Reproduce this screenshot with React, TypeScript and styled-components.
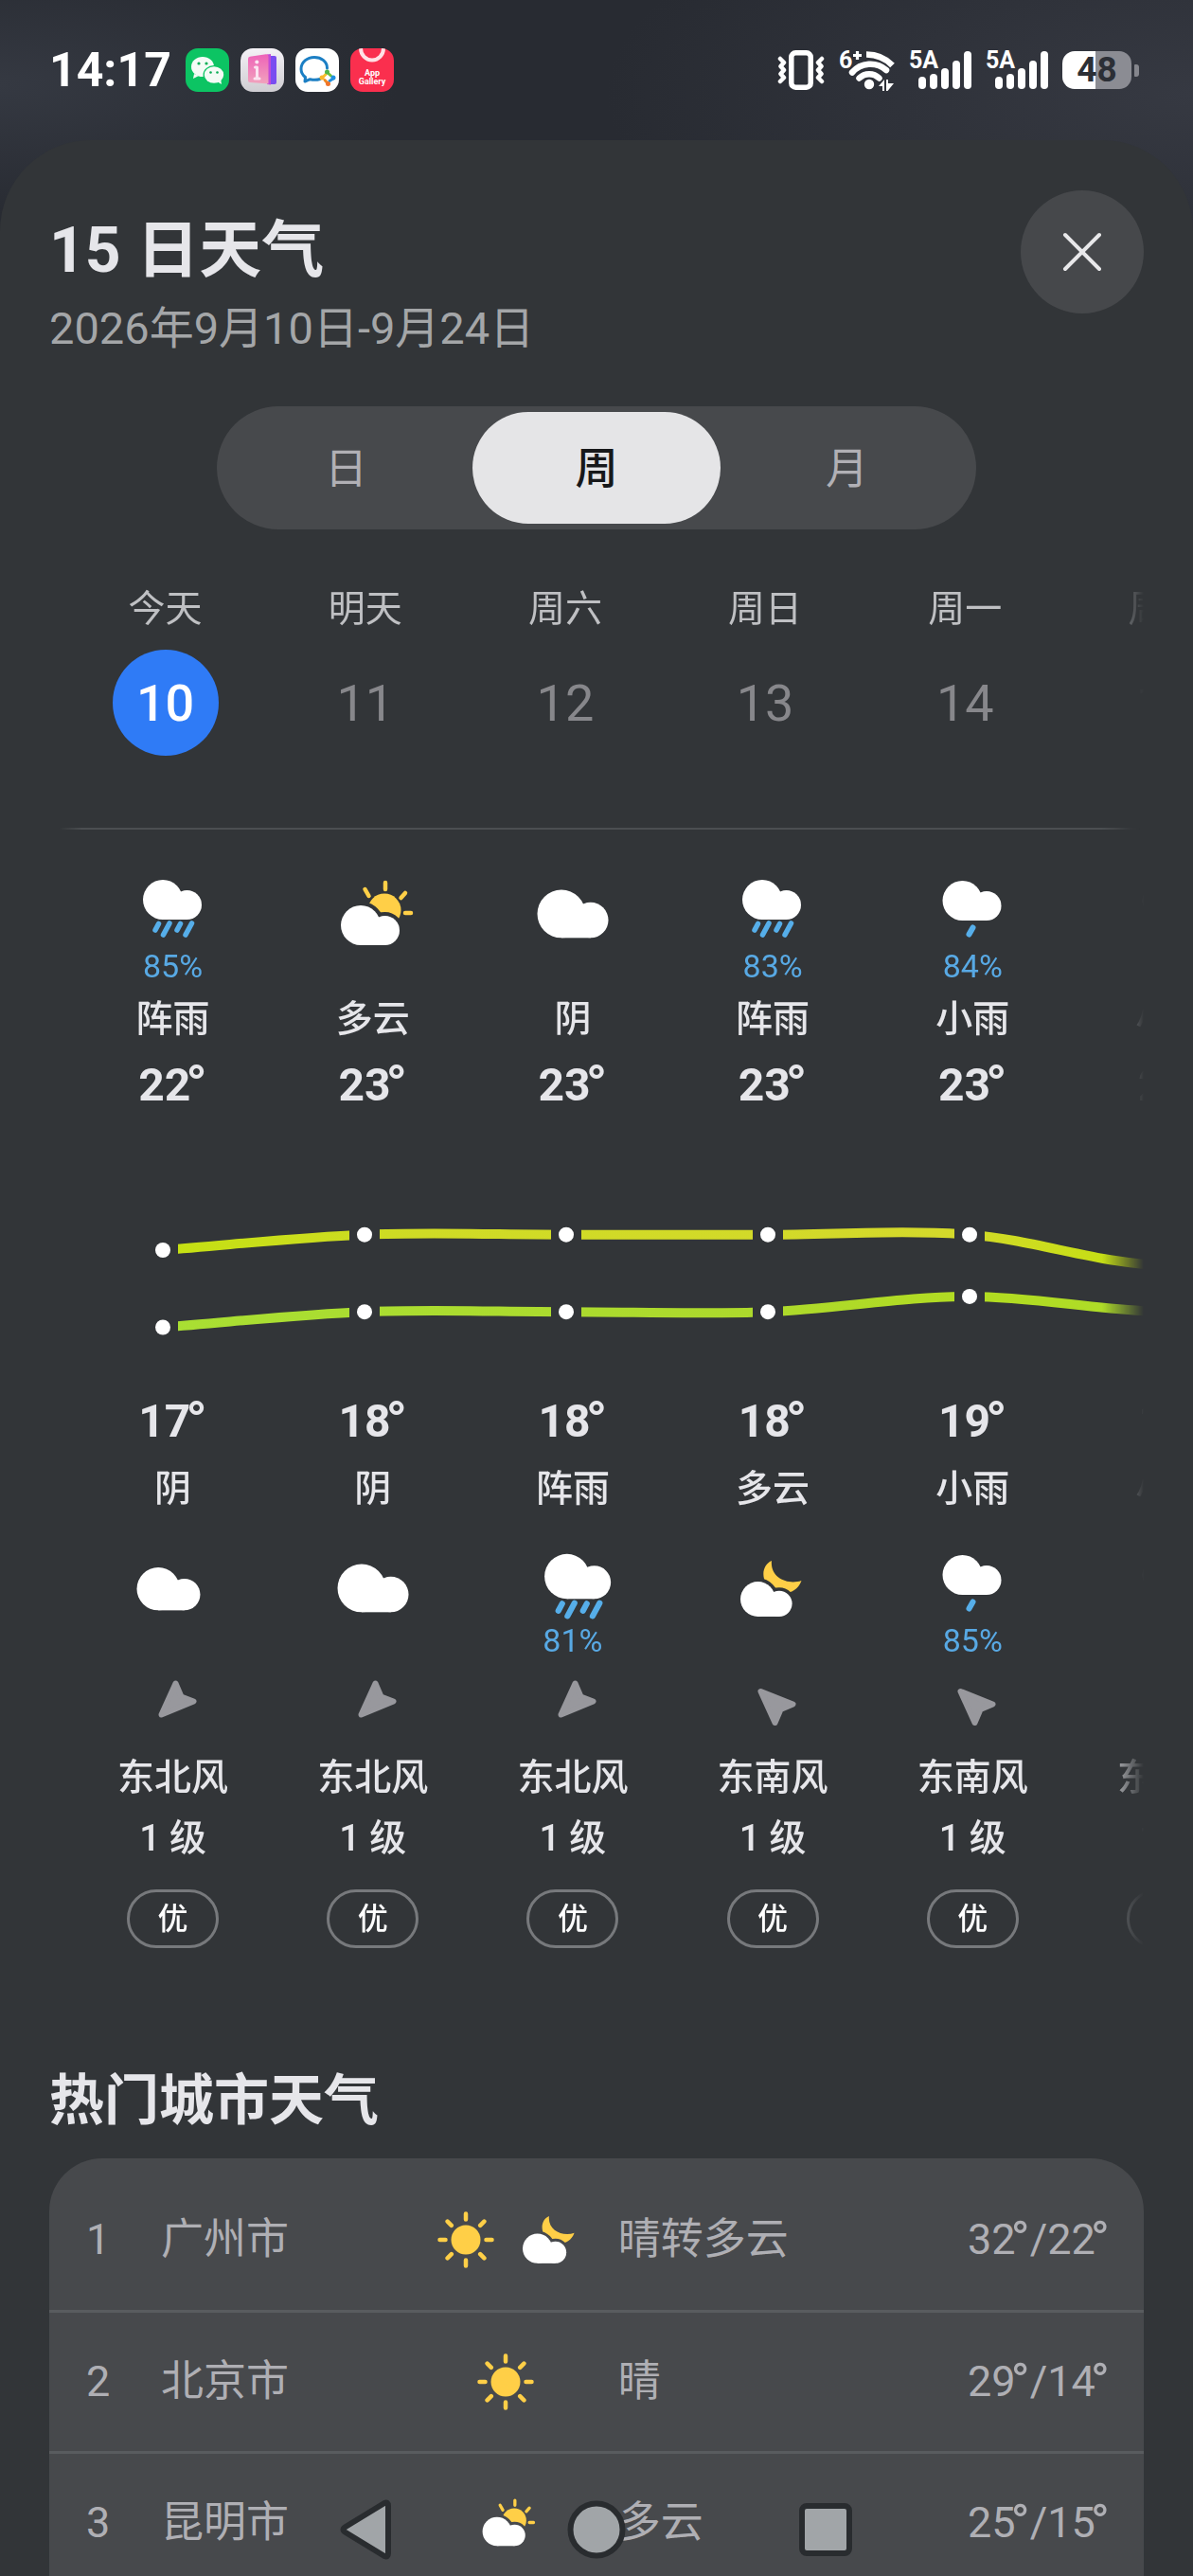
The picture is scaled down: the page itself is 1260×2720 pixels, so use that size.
import React, { useId, useState } from "react";
import styled, { createGlobalStyle } from "styled-components";

const GlobalStyle = createGlobalStyle`
  *, *::before, *::after { box-sizing: border-box; }
  html, body { margin: 0; background: #2b2e35; }
  body {
    font-family: Roboto, "Noto Sans CJK SC", sans-serif;
    color: #e6e6ea;
    overflow: hidden;
  }
  button { font: inherit; color: inherit; border: 0; padding: 0; background: none; cursor: pointer; }
  svg { display: block; }
`;

/* ---------- layout ---------- */

const Screen = styled.div`
  display: flex;
  flex-direction: column;
  height: 100vh;
  background:
    radial-gradient(420px 140px at 0% 90px, #353942, transparent),
    radial-gradient(620px 240px at 100% 100px, #363942, transparent),
    #282b32;
`;

const StatusBar = styled.header`
  display: flex;
  flex: none;
  align-items: center;
  justify-content: space-between;
  height: 148px;
  padding: 0 57px 0 52px;
  color: #fff;
`;

const StatusGroup = styled.div<{ $gap: number }>`
  display: flex;
  align-items: center;
  gap: ${(p) => p.$gap}px;
`;

const Clock = styled.time`
  margin-right: 3px;
  font-size: 50px;
  font-weight: 700;
  line-height: 56px;
`;

const Sheet = styled.main`
  display: flex;
  flex: 1;
  flex-direction: column;
  min-height: 0;
  overflow: hidden;
  padding: 53px 52px 0;
  border-radius: 96px 96px 0 0;
  background: #323538;
`;

const SheetHeader = styled.div`
  display: flex;
  flex: none;
  justify-content: space-between;
  align-items: flex-start;
`;

const TitleBlock = styled.div`
  padding-top: 24px;
`;

const Title = styled.h1`
  margin: 0;
  font-size: 66px;
  font-weight: 700;
  line-height: 80px;
`;

const DateRange = styled.p`
  margin: 12px 0 0;
  color: #a4a6a8;
  font-size: 47px;
  line-height: 60px;
`;

const CloseButton = styled.button`
  display: grid;
  place-items: center;
  width: 130px;
  height: 130px;
  border-radius: 50%;
  background: #46484b;
`;

const Segmented = styled.div`
  display: grid;
  flex: none;
  grid-template-columns: repeat(3, 1fr);
  gap: 3px;
  align-self: center;
  width: 69.4%;
  height: 130px;
  margin-top: 52px;
  padding: 6px;
  border-radius: 65px;
  background: #47494c;
`;

const Segment = styled.button<{ $active: boolean }>`
  padding-bottom: 6px;
  border-radius: 60px;
  background: ${(p) => (p.$active ? "#e5e5e7" : "transparent")};
  color: ${(p) => (p.$active ? "#17181a" : "#b1b0b5")};
  font-size: 45px;
  font-weight: ${(p) => (p.$active ? 500 : 400)};
`;

const Scroller = styled.section`
  flex: none;
  overflow: hidden;
  mask-image: linear-gradient(to right, #000 calc(100% - 44px), transparent);
`;

const Days = styled.ul<{ $indent: number; $top: number }>`
  display: grid;
  grid-auto-flow: column;
  grid-auto-columns: 16.76vw;
  margin: 0;
  padding: ${(p) => p.$top}px 0 0 ${(p) => p.$indent}px;
  list-style: none;
`;

const Day = styled.li`
  display: flex;
  flex-direction: column;
  align-items: center;
  white-space: nowrap;
`;

const DayName = styled.span`
  color: #bfc0c3;
  font-size: 39px;
  line-height: 56px;
`;

const DayNumber = styled.button<{ $active: boolean }>`
  width: 112px;
  height: 112px;
  margin-top: 15px;
  border-radius: 50%;
  background: ${(p) => (p.$active ? "#2f7bf6" : "transparent")};
  color: ${(p) => (p.$active ? "#fff" : "#87878b")};
  font-size: 54px;
  font-weight: ${(p) => (p.$active ? 500 : 400)};
`;

const Divider = styled.hr`
  height: 2px;
  margin: 76px 4px 0 10px;
  border: 0;
  background: linear-gradient(to right, transparent, #4b4e51 24px, #4b4e51 calc(100% - 24px), transparent);
`;

const IconBox = styled.div`
  width: 96px;
  height: 88px;
`;

const Chance = styled.span`
  height: 34px;
  color: #58a9e4;
  font-size: 34px;
  line-height: 34px;
`;

const Label = styled.span<{ $top: number }>`
  margin-top: ${(p) => p.$top}px;
  font-size: 39px;
  font-weight: 500;
  line-height: 56px;
`;

const NightIcon = styled.div`
  margin-top: 27px;
`;

const Temperature = styled.strong<{ $top: number }>`
  margin-top: ${(p) => p.$top}px;
  font-size: 48px;
  font-weight: 700;
  line-height: 56px;
`;

const Degree = styled.span<{ $size: number }>`
  margin-left: -5px;
  font-size: ${(p) => p.$size}px;
  line-height: 1px;
  vertical-align: -3px;
`;

const Chart = styled.svg`
  width: 100%;
  height: auto;
  margin-top: 96px;
`;

const WindIcon = styled.svg`
  width: 52px;
  height: 52px;
  margin-top: 23px;
  fill: #98989d;
  stroke: #98989d;
`;

const AirBadge = styled.span`
  display: grid;
  place-items: center;
  width: 97px;
  height: 62px;
  margin-top: 26px;
  border: 3px solid #77797c;
  border-radius: 31px;
  color: #fff;
  font-size: 32px;
  font-weight: 500;
  line-height: 40px;
`;

const SectionTitle = styled.h2`
  flex: none;
  margin: 121px 0 0;
  font-size: 58px;
  font-weight: 700;
  line-height: 80px;
`;

const Card = styled.div`
  flex: 1;
  min-height: 0;
  margin-top: 21px;
  padding-top: 12px;
  overflow: hidden;
  border-radius: 56px 56px 0 0;
  background: #47494c;
`;

const Cities = styled.table`
  width: 100%;
  border-collapse: collapse;
  table-layout: fixed;
  color: #afafb4;
  font-size: 45px;
  line-height: 60px;
`;

const CityRow = styled.tr`
  height: 149px;
  border-bottom: 3px solid #595c5f;
`;

const Cell = styled.td<{ $width: string; $left?: number; $right?: number; $align?: string }>`
  width: ${(p) => p.$width};
  padding: 0 ${(p) => p.$right ?? 0}px 0 ${(p) => p.$left ?? 0}px;
  text-align: ${(p) => p.$align ?? "left"};
  white-space: nowrap;
`;

const CityIcons = styled.div`
  display: flex;
  align-items: center;
  justify-content: center;
  gap: 30px;
`;

const CompactIcon = styled.svg`
  overflow: visible;
`;

const NavBar = styled.nav`
  position: fixed;
  right: 0;
  bottom: 0;
  left: 0;
  display: flex;
  justify-content: center;
  gap: 178px;
  height: 96px;
  padding-top: 15px;
`;

const NavButton = styled.button`
  width: 64px;
  height: 64px;
`;

/* ---------- weather drawings ---------- */

const YELLOW = "#ffcf47";
const BLUE = "#56aee9";

const CloudShape = () => (
  <>
    <circle cx="21" cy="21" r="21" />
    <circle cx="46.5" cy="26.5" r="15.5" />
    <rect x="21" y="24" width="25.5" height="18" />
  </>
);

type Sky = "cloud" | "cloudSmall" | "rain" | "rainLarge" | "drizzle" | "sunCloud" | "moonCloud" | "sun";

const Rain = () => (
  <g stroke={BLUE} strokeWidth="5.5" strokeLinecap="round">
    <path d="M32.5 60.5 29 67M44 60 37.5 72M55.5 60.5 52 67M67.5 60 61 72" />
  </g>
);

function SkyDrawing({ kind }: { kind: Sky }) {
  const id = useId().replace(/[^a-zA-Z0-9]/g, "");
  switch (kind) {
    case "cloud":
      return <g fill="#fff" transform="translate(10.5 24.5) scale(1.21)"><CloudShape /></g>;
    case "cloudSmall":
      return <g fill="#fff" transform="translate(9.5 28) scale(1.08)"><CloudShape /></g>;
    case "rain":
      return <><g fill="#fff" transform="translate(16 14)"><CloudShape /></g><Rain /></>;
    case "rainLarge":
      return (
        <g transform="translate(0 -2) scale(1.13)">
          <g fill="#fff" transform="translate(16 14)"><CloudShape /></g><Rain />
        </g>
      );
    case "drizzle":
      return (
        <>
          <g fill="#fff" transform="translate(16.5 15)"><CloudShape /></g>
          <path d="M48.5 64.5 44.5 71.5" stroke={BLUE} strokeWidth="6" strokeLinecap="round" />
        </>
      );
    case "sunCloud":
      return (
        <>
          <mask id={id}>
            <rect width="100" height="100" fill="#fff" />
            <g transform="translate(14 41)" stroke="#000" strokeWidth="8"><CloudShape /></g>
          </mask>
          <circle cx="60" cy="46" r="17.5" fill={YELLOW} mask={`url(#${id})`} />
          <path d="M61 17V24M39.5 24 43.5 31M82 28 77.5 33M82 49H88" stroke={YELLOW} strokeWidth="4.5" strokeLinecap="round" />
          <g fill="#fff" transform="translate(14 41)"><CloudShape /></g>
        </>
      );
    case "moonCloud":
      return (
        <>
          <mask id={id}>
            <rect width="100" height="100" fill="#fff" />
            <g transform="translate(14 43) scale(.88)" stroke="#000" strokeWidth="8"><CloudShape /></g>
          </mask>
          <path d="M47 21C38 25 36 36 41 45 49 58 72 60 78.5 42 64 47 45 39 47 21Z" fill={YELLOW} mask={`url(#${id})`} />
          <g fill="#fff" transform="translate(14 43) scale(.88)"><CloudShape /></g>
        </>
      );
    case "sun":
      return (
        <>
          <circle cx="30" cy="30" r="15.5" fill={YELLOW} />
          <path
            d="M30 2.5V8.500M30 51.500V57.500M2.500 30H8.500M51.500 30H57.500M10.600 10.600 14.800 14.800M45.200 45.200 49.400 49.400M10.600 49.400 14.800 45.200M45.200 14.800 49.400 10.600"
            stroke={YELLOW} strokeWidth="4.5" strokeLinecap="round"
          />
        </>
      );
  }
}

const SkyIcon = ({ kind }: { kind: Sky }) => (
  <IconBox>
    <svg width="96" height="88" viewBox="0 0 96 88" aria-hidden="true"><SkyDrawing kind={kind} /></svg>
  </IconBox>
);

const compactBox: Partial<Record<Sky, [string, number, number]>> = {
  sun: ["0 0 60 60", 60, 60],
  moonCloud: ["14 20 65 60", 55, 51],
  sunCloud: ["8 14 79 70", 58, 51],
};

const CompactSkyIcon = ({ kind }: { kind: Sky }) => {
  const [viewBox, width, height] = compactBox[kind]!;
  return <CompactIcon viewBox={viewBox} width={width} height={height} aria-hidden="true"><SkyDrawing kind={kind} /></CompactIcon>;
};

/* ---------- data ---------- */

interface Forecast {
  name: string; date: number;
  high: number; dayText: string; dayIcon: Sky; dayChance?: number;
  low: number; nightText: string; nightIcon: Sky; nightChance?: number;
  wind: "东北风" | "东南风"; air: string;
}

const forecast: Forecast[] = [
  { name: "今天", date: 10, high: 22, dayText: "阵雨", dayIcon: "rain", dayChance: 85, low: 17, nightText: "阴", nightIcon: "cloudSmall", wind: "东北风", air: "优" },
  { name: "明天", date: 11, high: 23, dayText: "多云", dayIcon: "sunCloud", low: 18, nightText: "阴", nightIcon: "cloud", wind: "东北风", air: "优" },
  { name: "周六", date: 12, high: 23, dayText: "阴", dayIcon: "cloud", low: 18, nightText: "阵雨", nightIcon: "rainLarge", nightChance: 81, wind: "东北风", air: "优" },
  { name: "周日", date: 13, high: 23, dayText: "阵雨", dayIcon: "rain", dayChance: 83, low: 18, nightText: "多云", nightIcon: "moonCloud", wind: "东南风", air: "优" },
  { name: "周一", date: 14, high: 23, dayText: "小雨", dayIcon: "drizzle", dayChance: 84, low: 19, nightText: "小雨", nightIcon: "drizzle", nightChance: 85, wind: "东南风", air: "优" },
  { name: "周二", date: 15, high: 21, dayText: "小雨", dayIcon: "drizzle", low: 18, nightText: "小雨", nightIcon: "drizzle", wind: "东南风", air: "优" },
];

const cities: { name: string; icons: Sky[]; text: string; high: number; low: number }[] = [
  { name: "广州市", icons: ["sun", "moonCloud"], text: "晴转多云", high: 32, low: 22 },
  { name: "北京市", icons: ["sun"], text: "晴", high: 29, low: 14 },
  { name: "昆明市", icons: ["sunCloud"], text: "多云", high: 25, low: 15 },
];

/* ---------- chart ---------- */

const STEP = 213;
const chartY = (t: number) => 50 + (22 - t) * 16.3;

function curve(values: number[]) {
  const pts = values.map((v, i) => [120 + i * STEP, chartY(v)]);
  const slope = (i: number) => {
    const a = pts[Math.max(i - 1, 0)];
    const b = pts[Math.min(i + 1, pts.length - 1)];
    return i === pts.length - 1 ? 0 : (b[1] - a[1]) / (b[0] - a[0]);
  };
  const h = STEP / 3;
  return pts.slice(1).reduce(
    (d, p, i) => `${d}C${pts[i][0] + h} ${pts[i][1] + slope(i) * h} ${p[0] - h} ${p[1] - slope(i + 1) * h} ${p[0]} ${p[1]}`,
    `M${pts[0][0]} ${pts[0][1]}`
  );
}

function TemperatureChart() {
  const highs = forecast.map((f) => f.high);
  const lows = forecast.map((f) => f.low);
  return (
    <Chart viewBox="0 0 1156 160" role="img" aria-label="气温曲线">
      <defs>
        <linearGradient id="highLine" gradientUnits="userSpaceOnUse" x1="120" y1="0" x2="1156" y2="0">
          <stop offset="0" stopColor="#c4e012" />
          <stop offset=".26" stopColor="#cfdb25" />
          <stop offset=".8" stopColor="#d4d92b" />
          <stop offset="1" stopColor="#c3e010" />
        </linearGradient>
        <linearGradient id="lowLine" gradientUnits="userSpaceOnUse" x1="120" y1="0" x2="1156" y2="0">
          <stop offset="0" stopColor="#a9df33" />
          <stop offset=".6" stopColor="#add92c" />
          <stop offset=".85" stopColor="#b2dc21" />
          <stop offset="1" stopColor="#addc2a" />
        </linearGradient>
        <mask id="pointGaps" maskUnits="userSpaceOnUse" x="0" y="0" width="1300" height="160">
          <rect width="1300" height="160" fill="#fff" />
          {forecast.map((f, i) => <rect key={f.date} x={104 + i * STEP} width="32" height="160" fill="#000" />)}
        </mask>
      </defs>
      <g fill="none" strokeWidth="10" mask="url(#pointGaps)">
        <path d={curve(highs)} stroke="url(#highLine)" />
        <path d={curve(lows)} stroke="url(#lowLine)" />
      </g>
      {[highs, lows].map((set, s) =>
        set.map((t, i) => <circle key={`${s}-${i}`} cx={120 + i * STEP} cy={chartY(t)} r="8" fill="#fff" />)
      )}
    </Chart>
  );
}

/* ---------- status bar drawings ---------- */

const AppTile = styled.svg`
  width: 46px;
  height: 46px;
  border-radius: 13px;
`;

const StatusText = styled.text`
  font: 700 25px Roboto, sans-serif;
  fill: #fff;
`;

const WeChatTile = () => (
  <AppTile viewBox="0 0 46 46" aria-label="微信">
    <rect width="46" height="46" fill="#0cc463" />
    <g fill="#f4fbf6">
      <path d="M9 27 8 32 14 29Z" /><ellipse cx="18" cy="19.5" rx="12" ry="10.5" />
    </g>
    <ellipse cx="30" cy="28" rx="11.5" ry="10" fill="#0cc463" />
    <g fill="#f4fbf6"><ellipse cx="30" cy="28" rx="10.2" ry="8.7" /><path d="M33 35 38 38 37 32Z" /></g>
    <g fill="#0cae57"><circle cx="14" cy="16" r="1.6" /><circle cx="22" cy="16" r="1.6" /><circle cx="26.5" cy="25.5" r="1.3" /><circle cx="33.5" cy="25.5" r="1.3" /></g>
  </AppTile>
);

const BookTile = () => (
  <AppTile viewBox="0 0 46 46" aria-label="阅读">
    <defs>
      <linearGradient id="bookBg" x2="0" y2="1"><stop stopColor="#f4f1f6" /><stop offset="1" stopColor="#cfcdd2" /></linearGradient>
      <linearGradient id="bookCover" x2="0" y2="1"><stop stopColor="#ee62b8" /><stop offset="1" stopColor="#f1a3bd" /></linearGradient>
    </defs>
    <rect width="46" height="46" fill="url(#bookBg)" />
    <path d="M28 8 36 8Q38 8 38 10V36Q38 38 36 38H28Z" fill="#7a4cf0" />
    <path d="M28 6.5 32 6V38.500L28 38Z" fill="#c04bd8" />
    <path d="M8 11Q8 9 10 8.700L27 6.200Q29.500 6 29.500 8.500V37.500L10 36Q8 36 8 34Z" fill="url(#bookCover)" />
    <g stroke="#fbe3f0" strokeWidth="3" strokeLinecap="round"><path d="M17.500 20V31M15.500 20H17.500M15 32H20" /></g>
    <circle cx="17.3" cy="14.5" r="2" fill="#fbe3f0" />
  </AppTile>
);

const WorkTile = () => (
  <AppTile viewBox="0 0 46 46" aria-label="企业微信">
    <rect width="46" height="46" fill="#fff" />
    <path d="M33.500 21C33.500 14 27.500 9.500 20 9.500S6 14.500 6 22C6 26 8 28.500 10.500 30.500L10 35 15.500 32.700Q21 34 26 32.500" fill="none" stroke="#1c7fc4" strokeWidth="3" strokeLinejoin="round" strokeLinecap="round" />
    <g fill="none" strokeWidth="3" strokeLinecap="round">
      <path d="M33 25 37.500 29" stroke="#6cbf3f" /><path d="M40 32 36 34.500" stroke="#1f8fe0" />
      <path d="M34 37 31 33.500" stroke="#f08a24" /><path d="M28.500 31 32 27.500" stroke="#f6c02c" />
    </g>
    <g><circle cx="33.5" cy="25" r="2.5" fill="#4fb54a" /><circle cx="40" cy="31" r="2.5" fill="#1f8fe0" /><circle cx="34.5" cy="37.5" r="2.5" fill="#f0752b" /><circle cx="28" cy="31" r="2.5" fill="#f8b62c" /></g>
  </AppTile>
);

const TileText = styled.text`
  font: 700 9px Roboto, sans-serif;
  fill: #fff;
  text-anchor: middle;
`;

const GalleryTile = () => (
  <AppTile viewBox="0 0 46 46" aria-label="AppGallery">
    <rect width="46" height="46" fill="#fa2f4e" />
    <path d="M11 0A12 12.500 0 0 0 35 0" fill="none" stroke="#ffe1e5" strokeWidth="4" />
    <TileText x="23" y="29">App</TileText>
    <TileText x="23" y="38">Gallery</TileText>
  </AppTile>
);

const VibrateIcon = () => (
  <svg width="50" height="44" viewBox="0 0 50 44" fill="none" stroke="#fff" aria-label="振动">
    <rect x="14.8" y="3.8" width="20.4" height="36.4" rx="4.5" strokeWidth="5.5" />
    <path d="M3 10 7 14 3.500 18 7 22 3.500 26 7 30 3 34M47 10 43 14 46.500 18 43 22 46.500 26 43 30 47 34" strokeWidth="4.5" strokeLinecap="round" strokeLinejoin="round" />
  </svg>
);

const WifiIcon = () => (
  <svg width="59" height="64" viewBox="0 -10 59 64" fill="none" stroke="#fff" aria-label="无线网络">
    <g strokeWidth="6.5">
      <path d="M29 5.500A38 38 0 0 1 56.500 17" />
      <path d="M14 24.500A25.500 25.500 0 0 1 50 22" strokeLinecap="round" />
      <path d="M21.500 30.500A15 15 0 0 1 42.500 30.500" strokeLinecap="round" />
    </g>
    <circle cx="32" cy="37" r="5.2" fill="#fff" stroke="none" />
    <path d="M42 39 48 32V44H46V39ZM50 32H52V36H58L51.500 44H50Z" fill="#fff" stroke="none" />
    <path d="M19.500 2V11M15 6.500H24" strokeWidth="3.2" />
    <StatusText x="0" y="20" stroke="none">6</StatusText>
  </svg>
);

const SignalIcon = () => (
  <svg width="66" height="64" viewBox="0 -10 66 64" aria-label="移动信号">
    <StatusText x="0" y="20">5A</StatusText>
    <g fill="#fff">
      <rect x="10" y="29" width="8" height="13" rx="4" /><rect x="22" y="26" width="8" height="16" rx="4" />
      <rect x="34" y="20" width="8" height="22" rx="4" /><rect x="46" y="12" width="8" height="30" rx="4" />
      <rect x="58" y="2" width="8" height="40" rx="4" />
    </g>
  </svg>
);

const Battery = styled.div`
  display: flex;
  align-items: center;
  gap: 3px;
  &::after {
    content: "";
    width: 5px;
    height: 13px;
    border-radius: 1px 3px 3px 1px;
    background: #85868d;
  }
`;

const BatteryBody = styled.span<{ $level: number }>`
  width: 73px;
  height: 40px;
  border-radius: 13px;
  background: linear-gradient(to right, #fff ${(p) => p.$level}%, #8b8c93 ${(p) => p.$level}%);
  color: #2c2f36;
  font-size: 37px;
  font-weight: 700;
  line-height: 40px;
  text-align: center;
`;

/* ---------- page ---------- */

const views = ["日", "周", "月"];

export default function App() {
  const [view, setView] = useState("周");
  const [selected, setSelected] = useState(10);

  return (
    <>
      <GlobalStyle />
      <Screen>
        <StatusBar>
          <StatusGroup $gap={12}>
            <Clock>14:17</Clock>
            <WeChatTile /><BookTile /><WorkTile /><GalleryTile />
          </StatusGroup>
          <StatusGroup $gap={15}>
            <VibrateIcon /><WifiIcon /><SignalIcon /><SignalIcon />
            <Battery><BatteryBody $level={48}>48</BatteryBody></Battery>
          </StatusGroup>
        </StatusBar>

        <Sheet>
          <SheetHeader>
            <TitleBlock>
              <Title>15 日天气</Title>
              <DateRange>2026年9月10日-9月24日</DateRange>
            </TitleBlock>
            <CloseButton aria-label="关闭">
              <svg width="44" height="44" viewBox="0 0 44 44" stroke="#e8e8ea" strokeWidth="4" strokeLinecap="round">
                <path d="M4 4 40 40M40 4 4 40" />
              </svg>
            </CloseButton>
          </SheetHeader>

          <Segmented role="group" aria-label="视图">
            {views.map((v) => (
              <Segment key={v} $active={v === view} aria-pressed={v === view} onClick={() => setView(v)}>{v}</Segment>
            ))}
          </Segmented>

          <Scroller>
            <Days $indent={17} $top={56}>
              {forecast.map((f) => (
                <Day key={f.date}>
                  <DayName>{f.name}</DayName>
                  <DayNumber $active={f.date === selected} onClick={() => setSelected(f.date)}>{f.date}</DayNumber>
                </Day>
              ))}
            </Days>
            <Divider />
            <Days $indent={25} $top={39}>
              {forecast.map((f) => (
                <Day key={f.date}>
                  <SkyIcon kind={f.dayIcon} />
                  <Chance>{f.dayChance && `${f.dayChance}%`}</Chance>
                  <Label $top={11}>{f.dayText}</Label>
                  <Temperature $top={14}>{f.high}<Degree $size={58}>°</Degree></Temperature>
                </Day>
              ))}
            </Days>
            <TemperatureChart />
            <Days $indent={25} $top={43}>
              {forecast.map((f) => (
                <Day key={f.date}>
                  <Temperature $top={0}>{f.low}<Degree $size={58}>°</Degree></Temperature>
                  <Label $top={15}>{f.nightText}</Label>
                  <NightIcon><SkyIcon kind={f.nightIcon} /></NightIcon>
                  <Chance>{f.nightChance && `${f.nightChance}%`}</Chance>
                  <WindIcon viewBox="0 0 52 52" strokeWidth="6" strokeLinejoin="round" aria-hidden="true">
                    <path d={f.wind === "东北风" ? "M13.5 38.5 28.5 5.5 34.5 19.5 47.5 24.5Z" : "M13.5 14 47.5 27.5 34.5 33 28.5 47Z"} />
                  </WindIcon>
                  <Label $top={25}>{f.wind}</Label>
                  <Label $top={8}>1 级</Label>
                  <AirBadge>{f.air}</AirBadge>
                </Day>
              ))}
            </Days>
          </Scroller>

          <SectionTitle>热门城市天气</SectionTitle>
          <Card>
            <Cities>
              <tbody>
                {cities.map((c, i) => (
                  <CityRow key={c.name}>
                    <Cell $width="10.2%" $left={39}>{i + 1}</Cell>
                    <Cell $width="24%">{c.name}</Cell>
                    <Cell $width="15%">
                      <CityIcons>{c.icons.map((k) => <CompactSkyIcon key={k} kind={k} />)}</CityIcons>
                    </Cell>
                    <Cell $width="25%" $left={32}>{c.text}</Cell>
                    <Cell $width="25.8%" $right={36} $align="right">
                      {c.high}<Degree $size={54}>°</Degree>/{c.low}<Degree $size={54}>°</Degree>
                    </Cell>
                  </CityRow>
                ))}
              </tbody>
            </Cities>
          </Card>
        </Sheet>
      </Screen>

      <NavBar aria-label="系统导航">
        <NavButton aria-label="返回">
          <svg width="64" height="64" viewBox="0 0 64 64" fill="#a1a5a8" stroke="#292c2f" strokeWidth="6" strokeLinejoin="round">
            <path d="M50 4Q54 2.500 54 7V57Q54 61.500 50 60L9 35Q4 32 9 29Z" />
          </svg>
        </NavButton>
        <NavButton aria-label="主页">
          <svg width="64" height="64" viewBox="0 0 64 64" fill="#a1a5a8" stroke="#292c2f" strokeWidth="6">
            <circle cx="32" cy="32" r="27.5" />
          </svg>
        </NavButton>
        <NavButton aria-label="最近任务">
          <svg width="64" height="64" viewBox="0 0 64 64" fill="#a1a5a8" stroke="#292c2f" strokeWidth="6">
            <rect x="7" y="7" width="50" height="50" rx="5" />
          </svg>
        </NavButton>
      </NavBar>
    </>
  );
}
